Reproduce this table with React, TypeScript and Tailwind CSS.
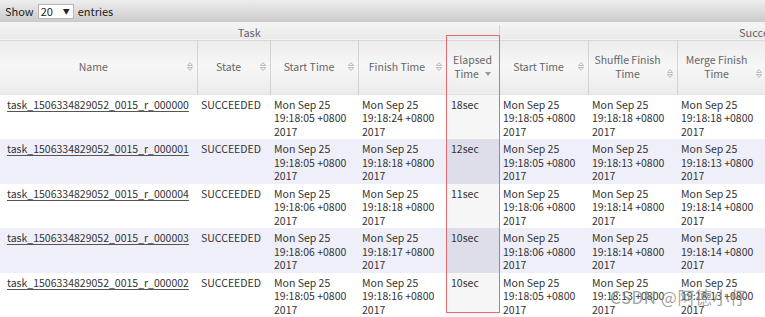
import React from 'react';

type Row = {
  id: string;
  start: string;
  finish: string;
  elapsed: string;
  start2: string;
  shuffle: string;
  merge: string;
};

const rows: Row[] = [
  { id: '000000', start: '19:18:05', finish: '19:18:24', elapsed: '18sec', start2: '19:18:05', shuffle: '19:18:18', merge: '19:18:18' },
  { id: '000001', start: '19:18:05', finish: '19:18:18', elapsed: '12sec', start2: '19:18:05', shuffle: '19:18:13', merge: '19:18:13' },
  { id: '000004', start: '19:18:06', finish: '19:18:18', elapsed: '11sec', start2: '19:18:06', shuffle: '19:18:14', merge: '19:18:14' },
  { id: '000003', start: '19:18:06', finish: '19:18:17', elapsed: '10sec', start2: '19:18:06', shuffle: '19:18:14', merge: '19:18:14' },
  { id: '000002', start: '19:18:05', finish: '19:18:16', elapsed: '10sec', start2: '19:18:05', shuffle: '19:18:13', merge: '19:18:13' },
];

const font = { fontFamily: '"Noto Sans CJK SC", "Noto Sans", sans-serif' };

function SortBoth() {
  return (
    <svg width="6" height="9" viewBox="0 0 6 9" className="absolute right-0 bottom-[3px]">
      <path d="M3 0.5 L5.5 3.5 L0.5 3.5 Z" fill="none" stroke="#b5b5b5" strokeWidth="0.9" />
      <path d="M3 8.5 L5.5 5.5 L0.5 5.5 Z" fill="none" stroke="#b5b5b5" strokeWidth="0.9" />
    </svg>
  );
}

function SortDesc() {
  return (
    <svg width="6" height="4" viewBox="0 0 6 4" className="inline-block ml-[6px] mb-[3px]">
      <path d="M0 0 L6 0 L3 4 Z" fill="#999" />
    </svg>
  );
}

function Head({ children, last }: { children: React.ReactNode; last?: boolean }) {
  return (
    <th className={`font-normal text-[#666] px-[4px] align-middle ${last ? '' : 'border-r border-[#d3d3d3]'}`}>
      <div className="relative text-center pr-[10px] leading-[14px]">
        {children}
        <SortBoth />
      </div>
    </th>
  );
}

function DateCell({ time }: { time: string }) {
  return (
    <td className="px-[4px] pt-[3px] pb-[1px] align-top">
      <span className="block">Mon Sep 25</span>
      <span className="block whitespace-nowrap">{time} +0800</span>
      <span className="block">2017</span>
    </td>
  );
}

export default function App() {
  return (
    <div className="relative w-[765px] h-[317px] overflow-hidden bg-white text-[10.5px]" style={font}>
      {/* length bar */}
      <div className="h-[22px] flex items-center gap-[4px] pl-[5px] text-[11px] text-[#222] bg-gradient-to-b from-[#eeeeee] to-[#cbcbcb]">
        <span>Show</span>
        <span className="flex items-center h-[15px] w-[36px] bg-white border border-[#b8b8b8] pl-[2px] leading-none">
          <span className="flex-1">20</span>
          <span className="text-[7px] pr-[3px]">▼</span>
        </span>
        <span>entries</span>
      </div>
      <div className="h-[3px] bg-[#f3f3f3]" />

      <table className="table-fixed border-collapse w-[1076px]">
        <colgroup>
          <col className="w-[197px]" />
          <col className="w-[73px]" />
          <col className="w-[88px]" />
          <col className="w-[88px]" />
          <col className="w-[53px]" />
          <col className="w-[89px]" />
          <col className="w-[89px]" />
          <col className="w-[89px]" />
          <col className="w-[89px]" />
          <col className="w-[55px]" />
          <col className="w-[55px]" />
          <col className="w-[56px]" />
          <col className="w-[55px]" />
        </colgroup>
        <thead>
          <tr className="h-[15px] bg-gradient-to-b from-[#f3f3f3] to-[#eaeaea] border-b border-[#d6d6d6]">
            <th colSpan={5} className="font-normal text-[11px] text-[#666] leading-[14px] border-r border-[#d3d3d3]">Task</th>
            <th colSpan={8} className="font-normal text-[11px] text-[#666] leading-[14px]">Successful Attempt</th>
          </tr>
          <tr className="h-[54px] bg-gradient-to-b from-[#ececec] via-[#f7f7f7] to-[#ececec] border-b border-[#e2e2e2]">
            <Head>Name</Head>
            <Head>State</Head>
            <Head>Start Time</Head>
            <Head>Finish Time</Head>
            <th className="font-normal text-[#666] px-[4px] align-middle border-r border-[#d3d3d3]">
              <div className="text-center leading-[14px]">
                Elapsed
                <br />
                Time<SortDesc />
              </div>
            </th>
            <Head>Start Time</Head>
            <Head>
              Shuffle Finish
              <br />
              Time
            </Head>
            <Head>
              Merge Finish
              <br />
              Time
            </Head>
            <Head>Finish Time</Head>
            <Head>
              Elapsed
              <br />
              Shuffle
            </Head>
            <Head>
              Elapsed
              <br />
              Merge
            </Head>
            <Head>
              Elapsed
              <br />
              Reduce
            </Head>
            <Head last>
              Elapsed
              <br />
              Time
            </Head>
          </tr>
        </thead>
        <tbody className="text-[#333] leading-[13.5px]">
          {rows.map((r, i) => {
            const odd = i % 2 === 1;
            return (
              <tr key={r.id} className={odd ? 'bg-[#efeff9]' : 'bg-white'}>
                <td className="pl-[7px] pr-[4px] pt-[3px] align-top whitespace-nowrap">
                  <span className="underline underline-offset-[2px] decoration-[#555]">task_1506334829052_0015_r_{r.id}</span>
                </td>
                <td className="px-[4px] pt-[3px] align-top">SUCCEEDED</td>
                <DateCell time={r.start} />
                <DateCell time={r.finish} />
                <td className={`px-[5px] pt-[3px] align-top ${odd ? 'bg-[#dedeea]' : 'bg-[#f6f6f6]'}`}>{r.elapsed}</td>
                <DateCell time={r.start2} />
                <DateCell time={r.shuffle} />
                <DateCell time={r.merge} />
                <DateCell time={r.finish} />
                <td className="px-[4px] pt-[3px] align-top">8sec</td>
                <td className="px-[4px] pt-[3px] align-top">0sec</td>
                <td className="px-[4px] pt-[3px] align-top">5sec</td>
                <td className="px-[4px] pt-[3px] align-top">{r.elapsed}</td>
              </tr>
            );
          })}
          <tr className="h-[8px] bg-[#ededed] border-t border-[#e0e0e0]">
            {Array.from({ length: 13 }).map((_, k) => (
              <td key={k} className={k < 12 ? 'border-r border-[#d8d8d8]' : ''} />
            ))}
          </tr>
        </tbody>
      </table>

      {/* annotation box round the sorted column */}
      <div className="absolute left-[446px] top-[35px] w-[54px] h-[278px] border-[1.5px] border-[#e46c6c] pointer-events-none" />

      {/* watermark */}
      <div className="absolute left-[610px] top-[287px] text-[17px] leading-[20px] text-[#8a8a8a]/80 tracking-[0.5px] pointer-events-none">
        CSDN @阿德小仔
      </div>
    </div>
  );
}
